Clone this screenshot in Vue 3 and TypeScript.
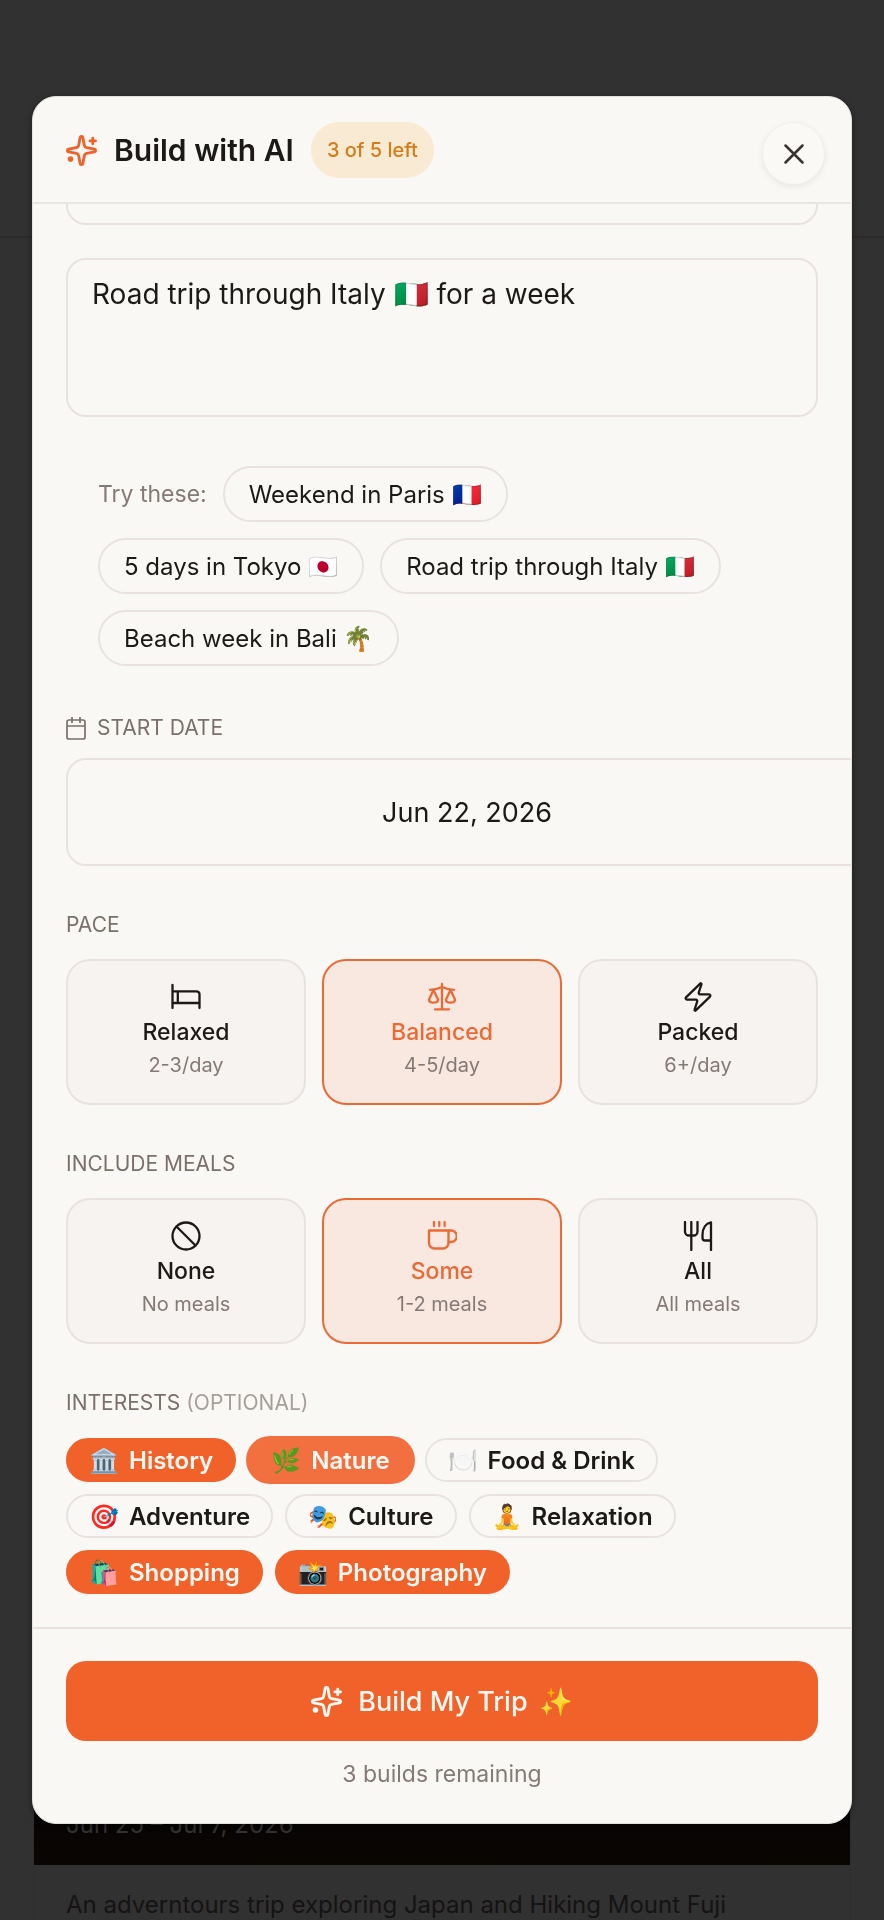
<script setup lang="ts">
import { ref } from 'vue'

interface Option {
  id: string
  label: string
  hint: string
}

interface Interest {
  emoji: string
  label: string
  hovered?: boolean
}

const place = ref('')
const prompt = ref('Road trip through Italy 🇮🇹 for a week')
const startDate = ref('Jun 22, 2026')
const pace = ref('balanced')
const meals = ref('some')
const selected = ref<string[]>(['History', 'Nature', 'Shopping', 'Photography'])

const suggestions: string[] = [
  'Weekend in Paris 🇫🇷',
  '5 days in Tokyo 🇯🇵',
  'Road trip through Italy 🇮🇹',
  'Beach week in Bali 🌴',
]

const paces: Option[] = [
  { id: 'relaxed', label: 'Relaxed', hint: '2-3/day' },
  { id: 'balanced', label: 'Balanced', hint: '4-5/day' },
  { id: 'packed', label: 'Packed', hint: '6+/day' },
]

const mealOptions: Option[] = [
  { id: 'none', label: 'None', hint: 'No meals' },
  { id: 'some', label: 'Some', hint: '1-2 meals' },
  { id: 'all', label: 'All', hint: 'All meals' },
]

const interests: Interest[] = [
  { emoji: '🏛️', label: 'History' },
  { emoji: '🌿', label: 'Nature', hovered: true },
  { emoji: '🍽️', label: 'Food & Drink' },
  { emoji: '🎯', label: 'Adventure' },
  { emoji: '🎭', label: 'Culture' },
  { emoji: '🧘', label: 'Relaxation' },
  { emoji: '🛍️', label: 'Shopping' },
  { emoji: '📸', label: 'Photography' },
]

function toggle(label: string) {
  selected.value = selected.value.includes(label)
    ? selected.value.filter((item) => item !== label)
    : [...selected.value, label]
}
</script>

<template>
  <div class="page">
    <div class="topbar"></div>
    <article class="trip">
      <div class="cover">
        <p class="dates">Jun 25 – Jul 7, 2026</p>
      </div>
      <p class="summary">An adverntours trip exploring Japan and Hiking Mount Fuji</p>
    </article>

    <div class="overlay">
      <form class="modal" role="dialog" aria-labelledby="modal-title" @submit.prevent>
        <header class="head">
          <div class="heading">
            <svg class="spark" viewBox="1 1 22 22" aria-hidden="true">
              <path d="M11.017 2.814a1 1 0 0 1 1.966 0l1.051 5.558a2 2 0 0 0 1.594 1.594l5.558 1.051a1 1 0 0 1 0 1.966l-5.558 1.051a2 2 0 0 0-1.594 1.594l-1.051 5.558a1 1 0 0 1-1.966 0l-1.051-5.558a2 2 0 0 0-1.594-1.594l-5.558-1.051a1 1 0 0 1 0-1.966l5.558-1.051a2 2 0 0 0 1.594-1.594z" />
              <path d="M20 3.2v4M22 5.2h-4" />
              <circle class="dot" cx="4.2" cy="18" r="1" />
            </svg>
            <h1 id="modal-title">Build with AI</h1>
            <span class="badge">3 of 5 left</span>
          </div>
          <button class="close" type="button" aria-label="Close">
            <svg viewBox="0 0 20 20" aria-hidden="true"><path d="M1.5 1.5l17 17M18.5 1.5l-17 17" /></svg>
          </button>
        </header>

        <div class="body">
          <input v-model="place" class="field place" type="text" aria-label="Destination" />
          <textarea v-model="prompt" class="field prompt" aria-label="Describe your trip"></textarea>

          <div class="suggestions">
            <span class="try">Try these:</span>
            <button v-for="s in suggestions" :key="s" class="chip" type="button" @click="prompt = s">{{ s }}</button>
          </div>

          <div class="group date-group">
            <label class="caption" for="start-date">
              <svg class="calendar" viewBox="0 0 20 23" aria-hidden="true">
                <rect x="1" y="3" width="18" height="19" rx="2" />
                <path d="M1 9h18M6 0v6M14 0v6" />
              </svg>
              START DATE
            </label>
            <input id="start-date" v-model="startDate" class="field date" type="text" />
          </div>

          <fieldset class="group">
            <legend class="caption">PACE</legend>
            <div class="options">
              <label v-for="p in paces" :key="p.id" class="option" :class="{ on: pace === p.id }">
                <input v-model="pace" class="radio" type="radio" name="pace" :value="p.id" />
                <svg v-if="p.id === 'relaxed'" class="icon" viewBox="0 0 30 30" aria-hidden="true">
                  <path d="M1.5 3v23M1.5 9.3h24a3 3 0 0 1 3 3V26M1.5 21h27M6.8 9.3V21" />
                </svg>
                <svg v-else-if="p.id === 'balanced'" class="icon" viewBox="0 0 30 30" aria-hidden="true">
                  <path d="M15 2v25M8 27.3h14M3 7.8c4.5 0 8-1 12-2.8 4 1.8 7.5 2.8 12 2.8" />
                  <path d="M6.5 8 2 17.5c0 4.2 9 4.2 9 0zM23.5 8 19 17.5c0 4.2 9 4.2 9 0z" />
                </svg>
                <svg v-else class="icon" viewBox="0 0 30 30" aria-hidden="true">
                  <path d="M4 17.7a1.4 1.4 0 0 1-1-2.3L17.2 1.6a.7.7 0 0 1 1.2.7L15.8 10.5a1.4 1.4 0 0 0 1.3 1.8H26a1.4 1.4 0 0 1 1 2.3L12.8 28.4a.7.7 0 0 1-1.2-.7l2.6-8.2a1.4 1.4 0 0 0-1.3-1.8z" />
                </svg>
                <span class="option-label">{{ p.label }}</span>
                <span class="option-hint">{{ p.hint }}</span>
              </label>
            </div>
          </fieldset>

          <fieldset class="group">
            <legend class="caption">INCLUDE MEALS</legend>
            <div class="options">
              <label v-for="m in mealOptions" :key="m.id" class="option" :class="{ on: meals === m.id }">
                <input v-model="meals" class="radio" type="radio" name="meals" :value="m.id" />
                <svg v-if="m.id === 'none'" class="icon" viewBox="0 0 30 30" aria-hidden="true">
                  <circle cx="15" cy="15" r="13.5" />
                  <path d="M5.5 5.5l19 19" />
                </svg>
                <svg v-else-if="m.id === 'some'" class="icon" viewBox="0 0 30 30" aria-hidden="true">
                  <path d="M7 1v4M12.3 1v4M17.6 1v4" />
                  <path d="M2 9.5h19.5V22a5.500 5.500 0 0 1-5.500 5.500H7.500A5.500 5.500 0 0 1 2 22z" />
                  <path d="M21.500 9.500H24a5 5 0 0 1 0 11.500h-2.500" />
                </svg>
                <svg v-else class="icon" viewBox="0 0 30 30" aria-hidden="true">
                  <path d="M2 1v9.500a4 4 0 0 0 4 4h4.500a4 4 0 0 0 4-4V1M8.300 1v28" />
                  <path d="M28 29V1.300c-5 1-8.500 5.700-8.500 12.700v3a2.500 2.500 0 0 0 2.500 2.500h6" />
                </svg>
                <span class="option-label">{{ m.label }}</span>
                <span class="option-hint">{{ m.hint }}</span>
              </label>
            </div>
          </fieldset>

          <fieldset class="group">
            <legend class="caption legend-text">INTERESTS <span class="optional">(OPTIONAL)</span></legend>
            <div class="tags">
              <button
                v-for="i in interests"
                :key="i.label"
                class="tag"
                :class="{ on: selected.includes(i.label), hovered: i.hovered }"
                type="button"
                :aria-pressed="selected.includes(i.label)"
                @click="toggle(i.label)"
              >
                <span class="emoji">{{ i.emoji }}</span>{{ i.label }}
              </button>
            </div>
          </fieldset>
        </div>

        <footer class="foot">
          <button class="build" type="submit">
            <svg class="spark" viewBox="1 1 22 22" aria-hidden="true">
              <path d="M11.017 2.814a1 1 0 0 1 1.966 0l1.051 5.558a2 2 0 0 0 1.594 1.594l5.558 1.051a1 1 0 0 1 0 1.966l-5.558 1.051a2 2 0 0 0-1.594 1.594l-1.051 5.558a1 1 0 0 1-1.966 0l-1.051-5.558a2 2 0 0 0-1.594-1.594l-5.558-1.051a1 1 0 0 1 0-1.966l5.558-1.051a2 2 0 0 0 1.594-1.594z" />
              <path d="M20 3.2v4M22 5.2h-4" />
              <circle class="dot" cx="4.2" cy="18" r="1" />
            </svg>
            <span>Build My Trip <span class="shine">✨</span></span>
          </button>
          <p class="remaining">3 builds remaining</p>
        </footer>
      </form>
    </div>
  </div>
</template>

<style>
body {
  background: #313131;
}
</style>

<style scoped>
* {
  box-sizing: border-box;
}

.page {
  height: 100vh;
  display: flex;
  flex-direction: column;
  overflow: hidden;
  background: #313131;
  color: #1c1917;
  font-family: Inter, "Liberation Sans", sans-serif;
}

button,
input,
textarea {
  font-family: inherit;
  color: inherit;
}

.topbar {
  flex: none;
  height: 238px;
  border-bottom: 2px solid #2d2a2a;
}

.trip {
  flex: 1;
  min-height: 0;
  margin: 32px 33px 0;
  display: flex;
  flex-direction: column;
  border: solid #2e2d2d;
  border-width: 0 1px;
}

.cover {
  flex: 1;
  display: flex;
  align-items: flex-end;
  padding: 0 32px 24px;
  background: linear-gradient(#1a1818, #080405 97%, #0a0602);
}

.dates,
.summary,
.remaining {
  margin: 0;
}

.dates {
  color: #343232;
  font-size: 24px;
  line-height: 32px;
}

.summary {
  padding: 24px 32px 0;
  color: #151313;
  font-size: 24px;
  line-height: 31px;
  white-space: nowrap;
}

.overlay {
  position: fixed;
  inset: 0;
  padding: 96px 32px;
  display: flex;
}

.modal {
  flex: 1;
  min-width: 0;
  display: flex;
  flex-direction: column;
  overflow: hidden;
  border: 1px solid #e7e2df;
  border-radius: 24px;
  background: #faf8f5;
  box-shadow: 0 2px 6px rgba(0, 0, 0, 0.4);
}

.head {
  flex: none;
  display: flex;
  justify-content: space-between;
  align-items: flex-start;
  padding: 25px 26px 17px 33px;
  border-bottom: 2px solid #e9e5e1;
}

.heading {
  display: flex;
  align-items: center;
  gap: 17px;
}

.spark {
  width: 31px;
  height: 31px;
  fill: none;
  stroke: #f1622a;
  stroke-width: 2;
  stroke-linecap: round;
  stroke-linejoin: round;
}

.dot {
  fill: currentColor;
}

.heading .spark {
  color: #f1622a;
}

h1 {
  margin: 0;
  font-size: 30px;
  font-weight: 600;
  line-height: 40px;
}

.badge {
  padding: 0 16px;
  border-radius: 28px;
  background: #f9ead3;
  color: #d47c17;
  font-size: 20px;
  font-weight: 500;
  line-height: 56px;
}

.close {
  width: 63px;
  height: 63px;
  display: grid;
  place-items: center;
  padding: 0;
  border: 1px solid #f1eeeb;
  border-radius: 50%;
  background: #faf9f6;
  box-shadow: 0 2px 6px rgba(0, 0, 0, 0.07);
}

.close svg {
  width: 20px;
  height: 20px;
  stroke: #3a3331;
  stroke-width: 2.5;
  stroke-linecap: round;
}

.body {
  flex: 1;
  min-height: 0;
  display: flex;
  flex-direction: column;
  justify-content: flex-end;
  overflow: hidden;
  padding: 0 33px 33px;
}

.body > * {
  flex: none;
}

.field {
  width: 100%;
  border: 2px solid #e9e2df;
  border-radius: 20px;
  background: transparent;
  font-size: 27px;
  line-height: 40px;
  outline: none;
}

.place {
  height: 80px;
  padding: 0 24px;
}

.prompt {
  height: 159px;
  margin-top: 33px;
  padding: 14px 24px;
  font-size: 28px;
  resize: none;
}

.suggestions {
  display: flex;
  flex-wrap: wrap;
  align-items: center;
  gap: 16px;
  margin-top: 49px;
  padding: 0 32px;
}

.try {
  color: #857975;
  font-size: 23px;
}

.chip {
  height: 56px;
  padding: 0 24px;
  border: 2px solid #e9e2df;
  border-radius: 28px;
  background: transparent;
  font-size: 24px;
}

.group {
  min-width: 0;
  margin: 47px 0 0;
  padding: 0;
  border: 0;
}

.date-group {
  margin-top: 50px;
}

.caption {
  display: flex;
  align-items: center;
  gap: 11px;
  padding: 0;
  color: #7b6f6a;
  font-size: 21px;
  line-height: 24px;
}

.legend-text {
  display: block;
}

.calendar {
  width: 20px;
  height: 23px;
  fill: none;
  stroke: #7b6f6a;
  stroke-width: 1.7;
}

.optional {
  color: #a69e99;
}

.date {
  width: calc(100% + 50px);
  height: 108px;
  margin-top: 18px;
  text-align: center;
}

.options {
  display: grid;
  grid-template-columns: repeat(3, minmax(0, 1fr));
  gap: 16px;
  margin-top: 22px;
}

.option {
  position: relative;
  display: flex;
  flex-direction: column;
  align-items: center;
  gap: 5px;
  padding: 21px 14px 25px;
  border: 2px solid #e9e2df;
  border-radius: 24px;
  background: #f6f3f0;
}

.option.on {
  border-color: #ea6a36;
  background: #f9e8e0;
}

.radio {
  position: absolute;
  inset: 0;
  margin: 0;
  opacity: 0;
}

.icon {
  width: 30px;
  height: 30px;
  fill: none;
  stroke: #1c1917;
  stroke-width: 2.3;
  stroke-linecap: round;
  stroke-linejoin: round;
}

.on .icon {
  stroke: #ea6a36;
}

.option-label {
  font-size: 23px;
  font-weight: 500;
  line-height: 30px;
}

.on .option-label {
  color: #ea6a36;
}

.option-hint {
  color: #857975;
  font-size: 20px;
  line-height: 26px;
}

.tags {
  display: flex;
  flex-wrap: wrap;
  gap: 12px;
  margin-top: 23px;
}

.tag {
  height: 44px;
  display: flex;
  align-items: center;
  gap: 10px;
  padding: 0 21px;
  border: 2px solid #e9e2df;
  border-radius: 22px;
  background: transparent;
  font-size: 24px;
  font-weight: 600;
  white-space: nowrap;
}

.tag.on {
  border-color: #f1622a;
  background: #f1622a;
  color: #fff8f3;
}

.tag.hovered {
  border-color: #f2703f;
  background: #f2703f;
  box-shadow: 0 0 0 2px #f2703f;
}

.emoji {
  width: 30px;
  text-align: center;
}

.foot {
  flex: none;
  padding: 32px 33px 34px;
  border-top: 2px solid #e9e2df;
}

.build {
  width: 100%;
  height: 80px;
  display: flex;
  justify-content: center;
  align-items: center;
  gap: 16px;
  border: 0;
  border-radius: 20px;
  background: #f1622a;
  color: #fff8f3;
  font-size: 27px;
  font-weight: 500;
}

.build .spark {
  stroke: #fff8f3;
}

.shine {
  margin-left: 4px;
}

.remaining {
  margin-top: 18px;
  color: #857975;
  font-size: 23px;
  line-height: 30px;
  text-align: center;
}
</style>
